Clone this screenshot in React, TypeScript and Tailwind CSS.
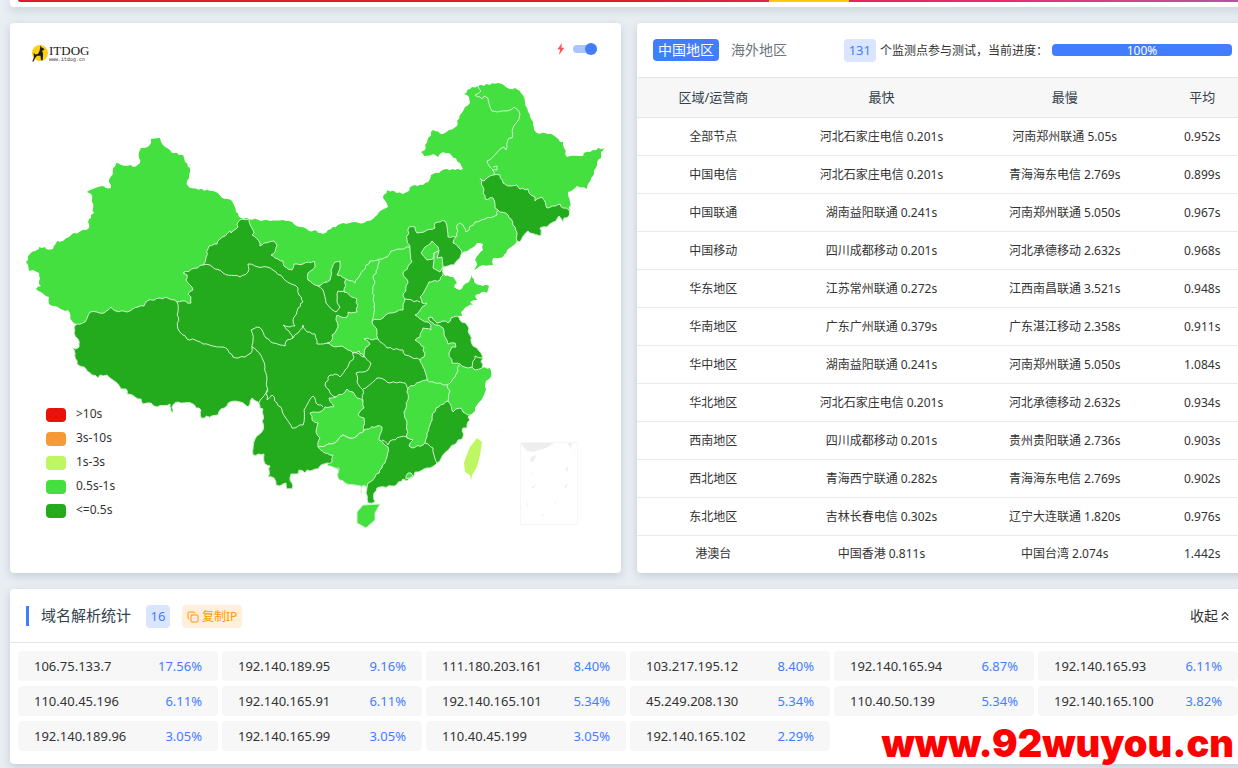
import React from "react";
import { ChevronsUp, Copy } from "lucide-react";

type Row = {
  area: string;
  fastest: string;
  slowest: string;
  average: string;
};

type ResolvedIp = {
  ip: string;
  share: string;
};

const rows: Row[] = [
  { area: "全部节点", fastest: "河北石家庄电信 0.201s", slowest: "河南郑州联通 5.05s", average: "0.952s" },
  { area: "中国电信", fastest: "河北石家庄电信 0.201s", slowest: "青海海东电信 2.769s", average: "0.899s" },
  { area: "中国联通", fastest: "湖南益阳联通 0.241s", slowest: "河南郑州联通 5.050s", average: "0.967s" },
  { area: "中国移动", fastest: "四川成都移动 0.201s", slowest: "河北承德移动 2.632s", average: "0.968s" },
  { area: "华东地区", fastest: "江苏常州联通 0.272s", slowest: "江西南昌联通 3.521s", average: "0.948s" },
  { area: "华南地区", fastest: "广东广州联通 0.379s", slowest: "广东湛江移动 2.358s", average: "0.911s" },
  { area: "华中地区", fastest: "湖南益阳联通 0.241s", slowest: "河南郑州联通 5.050s", average: "1.084s" },
  { area: "华北地区", fastest: "河北石家庄电信 0.201s", slowest: "河北承德移动 2.632s", average: "0.934s" },
  { area: "西南地区", fastest: "四川成都移动 0.201s", slowest: "贵州贵阳联通 2.736s", average: "0.903s" },
  { area: "西北地区", fastest: "青海西宁联通 0.282s", slowest: "青海海东电信 2.769s", average: "0.902s" },
  { area: "东北地区", fastest: "吉林长春电信 0.302s", slowest: "辽宁大连联通 1.820s", average: "0.976s" },
  { area: "港澳台", fastest: "中国香港 0.811s", slowest: "中国台湾 2.074s", average: "1.442s" },
];

const resolvedIps: ResolvedIp[] = [
  { ip: "106.75.133.7", share: "17.56%" },
  { ip: "192.140.189.95", share: "9.16%" },
  { ip: "111.180.203.161", share: "8.40%" },
  { ip: "103.217.195.12", share: "8.40%" },
  { ip: "192.140.165.94", share: "6.87%" },
  { ip: "192.140.165.93", share: "6.11%" },
  { ip: "110.40.45.196", share: "6.11%" },
  { ip: "192.140.165.91", share: "6.11%" },
  { ip: "192.140.165.101", share: "5.34%" },
  { ip: "45.249.208.130", share: "5.34%" },
  { ip: "110.40.50.139", share: "5.34%" },
  { ip: "192.140.165.100", share: "3.82%" },
  { ip: "192.140.189.96", share: "3.05%" },
  { ip: "192.140.165.99", share: "3.05%" },
  { ip: "110.40.45.199", share: "3.05%" },
  { ip: "192.140.165.102", share: "2.29%" },
];

const legend = [
  { label: ">10s", swatch: "bg-[#e8120c]" },
  { label: "3s-10s", swatch: "bg-[#f79a35]" },
  { label: "1s-3s", swatch: "bg-[#bff763]" },
  { label: "0.5s-1s", swatch: "bg-[#43e03f]" },
  { label: "<=0.5s", swatch: "bg-[#24aa1d]" },
];

const mainland =
  "M26,262 30,254 35,251 39,249 39,247 42,248 45,247 46,249 53,249 57,241 63,241 69,237 71,235 89,228 89,219 91,218 91,215 94,213 92,202 91,194 87,192 103,186 106,188 111,188 109,182 116,163 121,165 131,165 133,167 140,163 139,152 141,148 149,146 151,143 151,139 160,138 161,142 167,148 172,153 177,153 179,155 183,155 185,162 190,168 190,172 189,178 187,181 188,186 190,188 213,191 225,199 231,200 236,212 241,218 249,219 270,221 283,220 292,222 295,225 301,227 309,231 317,231 318,233 323,234 328,230 343,223 364,223 373,219 379,212 388,207 383,198 387,190 403,194 407,192 412,186 423,185 428,182 431,175 439,173 441,171 447,169 455,170 463,169 460,163 449,153 443,152 438,157 433,154 424,156 421,152 425,150 425,145 433,130 443,134 449,130 457,126 457,121 465,107 470,103 469,97 464,94 472,87 478,86 498,83 510,89 515,88 521,93 525,102 528,112 530,117 533,122 534,130 537,133 548,134 553,135 560,142 563,142 564,148 567,157 583,156 584,153 590,152 593,150 604,148 601,152 601,158 597,162 594,174 591,178 587,189 577,186 568,192 570,202 569,216 564,218 563,222 559,216 556,221 547,227 540,228 541,236 530,233 528,231 520,242 517,241 507,250 503,257 493,258 493,265 483,265 474,270 477,265 475,260 483,250 483,244 477,243 470,249 461,254 460,258 454,265 448,266 443,267 443,273 445,276 453,277 457,283 454,287 460,290 470,280 472,274 474,282 480,285 489,286 487,293 482,292 475,296 477,300 470,302 473,305 468,306 461,312 462,316 458,316 460,320 467,325 470,335 473,346 477,348 482,355 482,368 490,368 491,377 486,381 485,392 482,399 477,405 473,413 468,417 470,420 467,425 467,428 463,428 463,437 450,448 437,463 430,468 415,472 413,477 407,481 403,479 395,486 380,487 377,488 374,493 375,502 368,503 366,493 367,487 362,486 361,493 361,486 355,485 345,483 338,478 339,468 328,466 327,463 320,466 318,469 313,470 310,471 307,470 305,473 299,470 298,474 291,474 290,478 292,483 292,489 287,489 286,483 280,486 276,485 274,478 268,477 270,466 265,464 264,454 253,455 255,439 263,430 263,409 260,408 258,402 252,398 250,404 248,407 240,402 230,402 227,406 221,409 218,415 201,418 201,410 199,408 196,408 193,404 178,402 173,405 172,413 170,404 157,407 151,403 147,403 143,404 141,399 135,397 127,394 126,389 121,389 117,383 107,375 100,375 98,378 87,371 84,367 77,364 75,353 72,348 76,349 79,347 78,339 74,333 74,328 77,324 72,321 68,310 63,310 55,306 49,304 49,297 41,292 36,289 41,286 39,284 39,273 33,270 29,271 28,265Z";

// Gansu, Qinghai, Tibet, Sichuan, Yunnan, Chongqing, the central provinces, Hebei, Guangdong and Fujian
const fastBlock =
  "M77,324 85,322 90,312 97,312 104,313 111,307 116,311 127,312 138,307 144,306 147,301 160,298 168,298 177,302 182,301 191,303 191,297 188,294 193,290 190,285 186,280 187,275 183,273 203,265 206,257 209,246 217,244 220,239 230,231 231,233 238,227 238,222 242,219 249,219 254,233 252,235 260,243 260,246 264,243 274,241 277,245 275,252 271,255 278,259 283,261 284,266 288,269 292,270 294,264 303,264 314,261 315,267 308,273 308,280 318,286 330,280 331,270 335,262 340,261 340,268 337,275 346,279 344,292 357,299 357,312 348,312 347,317 341,317 337,315 336,320 338,327 335,333 332,335 332,340 327,343 332,346 342,346 348,350 353,353 359,351 364,357 366,347 370,344 364,339 378,339 377,332 372,321 383,318 390,313 403,310 405,299 403,296 408,283 403,273 412,262 410,252 410,248 407,240 409,227 415,227 417,233 424,232 435,228 435,223 440,222 445,221 448,237 456,237 453,243 459,248 462,253 460,258 454,265 448,266 443,267 443,275 440,280 429,282 420,297 422,303 427,303 421,309 415,315 422,320 428,322 431,325 431,330 423,328 420,337 415,340 424,347 424,357 420,360 423,367 427,380 420,382 408,388 407,392 408,400 404,412 407,423 407,438 413,440 409,446 412,448 423,445 425,443 427,433 430,425 432,417 436,408 448,401 453,412 456,409 460,408 463,412 470,415 468,417 470,420 467,425 467,428 463,428 463,437 450,448 437,463 430,468 415,472 413,477 407,481 403,479 395,486 380,487 377,488 374,493 375,502 368,503 366,493 367,487 327,463 320,466 318,469 313,470 310,471 307,470 305,473 299,470 298,474 291,474 290,478 292,483 292,489 287,489 286,483 280,486 276,485 274,478 268,477 270,466 265,464 264,454 253,455 255,439 263,430 263,409 260,408 258,402 252,398 250,404 248,407 240,402 230,402 227,406 221,409 218,415 201,418 201,410 199,408 196,408 193,404 178,402 173,405 172,413 170,404 157,407 151,403 147,403 143,404 141,399 135,397 127,394 126,389 121,389 117,383 107,375 100,375 98,378 87,371 84,367 77,364 75,353 72,348 76,349 79,347 78,339 74,333 74,328Z";

const jiangsu =
  "M428,318 432,317 437,323 443,321 448,323 451,318 457,316 460,320 467,325 470,335 473,346 477,348 482,355 482,368 475,370 472,367 468,368 460,364 452,363 449,353 452,347 456,347 455,343 448,344 444,335 443,328 433,323Z";

const jilin =
  "M480,178 484,181 493,175 500,175 503,183 510,186 517,185 520,189 528,189 531,195 535,197 535,201 542,197 547,208 555,206 560,204 563,208 569,210 569,216 564,218 563,222 559,216 556,221 547,227 540,228 541,236 530,233 528,231 520,242 517,241 517,233 515,227 508,215 498,210 495,208 493,198 485,199 483,187Z";

const guizhou =
  "M310,413 320,412 325,407 334,407 329,398 336,397 345,392 347,389 353,392 357,398 363,401 364,408 358,415 364,418 364,430 356,437 349,438 343,435 338,440 332,444 318,447 320,438 316,432 318,423 312,420Z";

const guangxi =
  "M318,447 332,444 338,440 343,435 349,438 356,437 364,430 377,426 382,427 379,440 385,445 388,447 387,457 382,468 375,477 368,483 367,487 362,486 361,493 361,486 355,485 345,483 338,478 339,468 328,466 327,463 332,462 333,455 325,453Z";

const slowIslands = [
  // Beijing
  "M421,253 425,247 430,244 432,241 438,247 439,251 434,253 433,259 427,260Z",
  // Tianjin
  "M439,251 437,258 442,257 443,267 440,272 433,268 434,260 434,253Z",
  // Hainan
  "M357,512 363,505 380,504 375,513 375,520 366,528 357,523Z",
  // Hong Kong
  "M406,476 408,473 411,473 413,476 410,478 406,479Z",
];

const borders = [
  "M478,86 481,91 475,95 482,99 484,96 488,98 492,111 498,112 507,111 514,107 520,114 517,122 513,128 512,138 509,138 506,150 504,147 487,161 493,170 494,175",
  "M493,167 497,166 497,170 492,170",
  "M498,210 497,215 485,219 475,222 466,232 463,225 460,223 457,225 457,237",
  "M410,247 400,249 391,251 387,257 379,259 370,261 360,275 355,283 346,279",
  "M379,260 378,268 373,278 375,282 373,290 374,307 372,321",
  "M177,302 178,312 178,329 187,339 195,340 203,344 213,346 223,347 228,350 233,357 238,358 245,357 251,353 252,348 253,340 251,330 257,327 262,330 266,338 273,343 280,345 285,346 287,340 293,338 290,333 283,325 290,327 295,326 293,320 298,308 303,302 299,295 298,288 283,278 276,272 267,267 258,267 248,264 248,272 240,277 223,273 210,265 203,265",
  "M293,338 298,333 303,325 307,332 315,334 317,344 327,343",
  "M318,286 323,290 326,303 336,312 340,307 337,300 338,291 344,291",
  "M252,347 257,351 263,360 265,367 267,387 267,400 272,395 277,403 282,410 292,428 303,425 304,410 313,396 316,403 323,407",
  "M259,403 262,398 267,390",
  "M353,352 354,357 345,370 340,377 335,374 330,375 325,385 330,393 336,397",
  "M353,352 365,357 371,363 368,370 356,373 357,382 363,390 363,401",
  "M378,339 387,348 403,350 405,355 420,360",
  "M363,389 377,378 385,380 390,383 400,382 405,383 408,390",
  "M382,440 388,445 390,441 400,437 407,437",
  "M405,299 420,302",
  "M427,380 433,382 440,383 447,385 455,377 459,365",
  "M447,385 450,391 448,401",
  "M425,443 433,448 437,463",
  "M472,367 475,356 482,358",
];

const tabs = ["中国地区", "海外地区"];

// Adds small bends to the longer segments. The bend depends only on the two end
// points, so a border shared by two provinces gets the same shape in both.
const roughen = (d: string) => {
  const closed = d.endsWith("Z");
  const points = d
    .replace(/[MZ]/g, "")
    .split(" ")
    .map((p) => p.split(",").map(Number));
  const out: string[] = [];
  points.forEach(([x, y], i) => {
    out.push(`${x},${y}`);
    const next = points[i + 1] ?? (closed ? points[0] : null);
    if (!next) return;
    const [nx, ny] = next;
    const length = Math.hypot(nx - x, ny - y);
    if (length < 5) return;
    const flip = nx < x || (nx === x && ny < y) ? -1 : 1;
    const ux = ((ny - y) / length) * flip;
    const uy = (-(nx - x) / length) * flip;
    const steps = Math.round(length / 3);
    for (let k = 1; k < steps; k++) {
      const px = x + ((nx - x) * k) / steps;
      const py = y + ((ny - y) * k) / steps;
      const bend = Math.sin(px * 12.9 + py * 78.2) * 0.9;
      out.push(`${(px + ux * bend).toFixed(1)},${(py + uy * bend).toFixed(1)}`);
    }
  });
  return `M${out.join(" ")}${closed ? "Z" : ""}`;
};

const Logo = () => (
  <svg viewBox="0 0 58 19" className="h-[19px] w-[58px]" role="img" aria-label="ITDOG">
    <circle cx="9" cy="10" r="8" fill="#fccf10" />
    <path d="M9.500 2l.6 2 3.200 1.900-.3 1.200-1.800.3.900 3.600-.4 6.200H10l-.5-4.400-3.400-.1-2 2.300-1.500 3.500-1.300.1L3 13.900l-.4-3.600 1.100.2.3.9 2.900-.4L8.600 8z" fill="#231a16" />
    <text x="18" y="12" fontSize="13" fill="#231a16" fontFamily="Liberation Serif, serif">ITDOG</text>
    <text x="18" y="18" fontSize="5" fill="#4a4340" fontFamily="Liberation Mono, monospace">www.itdog.cn</text>
  </svg>
);

const ChinaMap = () => (
  <svg viewBox="10 23 611 550" className="col-start-1 row-start-1 w-full" role="img" aria-label="中国地区响应时间">
    <g strokeLinejoin="round" strokeWidth="1">
      <path d={roughen(mainland)} fill="#43e03f" />
      <g stroke="#d3f3d1">
        <path d={roughen(fastBlock)} fill="#24aa1d" />
        <path d={roughen(jiangsu)} fill="#24aa1d" />
        <path d={roughen(jilin)} fill="#24aa1d" />
        <path d={roughen(guizhou)} fill="#43e03f" />
        <path d={roughen(guangxi)} fill="#43e03f" />
        {slowIslands.map((d) => (
          <path key={d} d={d} fill="#43e03f" />
        ))}
        {borders.map((d) => (
          <path key={d} d={roughen(d)} fill="none" />
        ))}
      </g>
      <path d="M477,438 482,442 481,449 480,455 477,467 472,475 471,481 470,475 465,472 464,463 466,457 470,447Z" fill="#bff763" />
    </g>
    <g fill="#eee">
      <path d="M521,444 523,442 556,442 546,448 533,452 527,451Z" />
      <path d="M567,443 572,443 571,448Z" />
      <path d="M531,457 536,455 534,461 530,462Z" />
      <path d="M566,468 568,467 567,473 566,472Z" />
      <path d="M530,470 533,475 532,475Z" />
      <path d="M531,488 536,484 534,488Z" />
      <path d="M564,487 568,483 566,488Z" />
      <path d="M526,500 528,506 527,506Z" />
      <path d="M553,505 557,500 556,503Z" />
      <path d="M541,515 546,514 542,516Z" />
      <path d="M573,452 575,448 574,452Z" />
      <path d="M497,432 499,431 499,432Z" />
    </g>
    <rect x="520.5" y="442.5" width="57" height="82" fill="none" stroke="#f6f6f6" />
  </svg>
);

const MapCard = () => (
  <section className="grid rounded bg-white shadow-[0_3px_10px_rgba(60,80,110,0.22)]">
    <ChinaMap />
    <header className="col-start-1 row-start-1 flex items-start justify-between self-start pt-5 pr-6 pl-[21px]">
      <Logo />
      <div className="flex items-center gap-2">
        <svg viewBox="0 0 8 12" className="h-3 w-2">
          <path d="M4.8 0L.4 6.6h2.8L2 12l5.3-7.2H4.5z" fill="#ff5252" />
        </svg>
        <input
          type="checkbox"
          defaultChecked
          aria-label="快速模式"
          className="flex h-2 w-6 appearance-none items-center justify-end rounded-full bg-[#a9c4ff] before:size-3 before:rounded-full before:bg-[#437dff]"
        />
      </div>
    </header>
    <ul className="col-start-1 row-start-1 flex flex-col self-end justify-self-start pb-[50px] pl-9">
      {legend.map((item) => (
        <li key={item.label} className="flex h-6 items-center gap-2.5 text-xs text-[#333]">
          <span className={`h-3.5 w-5 rounded ${item.swatch}`} />
          <span className="pb-0.5">{item.label}</span>
        </li>
      ))}
    </ul>
  </section>
);

const ResultCard = () => (
  <section className="rounded bg-white shadow-[0_3px_10px_rgba(60,80,110,0.22)]">
    <header className="flex h-[54px] items-center justify-between px-4">
      <div className="flex items-center gap-[7px]">
        {tabs.map((tab, i) => (
          <button
            key={tab}
            type="button"
            className={`h-[22px] rounded px-[5px] text-sm leading-[22px] ${i === 0 ? "bg-[#437dff] text-white" : "text-[#6c757d]"}`}
          >
            {tab}
          </button>
        ))}
      </div>
      <div className="flex items-center text-xs text-[#333]">
        <span className="mr-1 rounded bg-[#dae5ff] px-[5px] text-[13px] leading-[23px] text-[#437dff]">131</span>
        <span className="w-[172px] pt-0.5 whitespace-nowrap">个监测点参与测试，当前进度：</span>
        <div className="h-3 w-[180px] rounded bg-[#437dff] text-center leading-[13px] text-white">100%</div>
      </div>
    </header>
    <table className="w-full table-fixed border-t border-[#e5e7ea] text-center text-xs text-[#333]">
      <colgroup>
        <col className="w-1/4" />
        <col className="w-[30%]" />
        <col className="w-[30%]" />
        <col className="w-[15%]" />
      </colgroup>
      <thead>
        <tr className="h-10 border-b border-[#e5e7ea] bg-[#f7f7f7] text-[13px] text-[#32424c]">
          <th className="font-normal">区域/运营商</th>
          <th className="font-normal">最快</th>
          <th className="font-normal">最慢</th>
          <th className="font-normal">平均</th>
        </tr>
      </thead>
      <tbody>
        {rows.map((row) => (
          <tr key={row.area} className="h-[38px] border-b border-[#e9eaec] last:h-[37px] last:border-0">
            <td>{row.area}</td>
            <td>{row.fastest}</td>
            <td>{row.slowest}</td>
            <td>{row.average}</td>
          </tr>
        ))}
      </tbody>
    </table>
  </section>
);

const DnsCard = () => (
  <section className="relative rounded bg-white pb-[13px] shadow-[0_3px_10px_rgba(60,80,110,0.22)]">
    <header className="flex h-[54px] items-center border-b border-[#e2e4e6] px-4">
      <span className="h-5 w-[3px] bg-[#437dff]" />
      <h2 className="ml-3 text-[15px] text-[#32424c]">域名解析统计</h2>
      <span className="mt-0.5 ml-[15px] w-6 rounded bg-[#dae5ff] text-center text-[13px] leading-[23px] text-[#437dff]">16</span>
      <button type="button" className="mt-0.5 ml-3 flex items-center gap-[3px] rounded bg-[#ffefdc] px-[5px] text-xs leading-[23px] text-[#ff9800]">
        <Copy size={12} />
        复制IP
      </button>
      <button type="button" className="ml-auto flex items-center text-sm text-[#333]">
        收起
        <ChevronsUp size={14} />
      </button>
    </header>
    <ul className="grid grid-cols-6 gap-x-1 gap-y-[5px] pt-2 pr-2.5 pl-2">
      {resolvedIps.map((item) => (
        <li key={item.ip} className="flex h-[30px] items-center justify-between rounded bg-[#f7f7f7] px-4 pt-0.5 text-[13px] text-[#333]">
          <span>{item.ip}</span>
          <span className="text-[#437dff]">{item.share}</span>
        </li>
      ))}
    </ul>
    <p className="absolute right-3.5 bottom-0 font-[Inter,sans-serif] text-[38px] leading-[42px] font-black text-[#ff0000]">www.92wuyou.cn</p>
  </section>
);

const App: React.FC = () => {
  return (
    <main className="min-h-screen overflow-hidden bg-[#e9eef3] pl-2.5 font-['Noto_Sans','Noto_Sans_CJK_SC',sans-serif]">
      <div className="-mr-2.5 flex flex-col gap-4 pb-1">
        <div className="h-[7px] rounded-b bg-white px-2 shadow-[0_3px_10px_rgba(60,80,110,0.22)]">
          <div className="flex h-0.5 justify-center rounded-b bg-linear-to-r from-[#df1a2e] from-50% via-[#ec2870] via-80% to-[#b9509f]">
            <span className="ml-[360px] h-full w-20 bg-[#ffcb05]" />
          </div>
        </div>
        <div className="grid grid-cols-2 gap-4">
          <MapCard />
          <ResultCard />
        </div>
        <DnsCard />
      </div>
    </main>
  );
};

export default App;
